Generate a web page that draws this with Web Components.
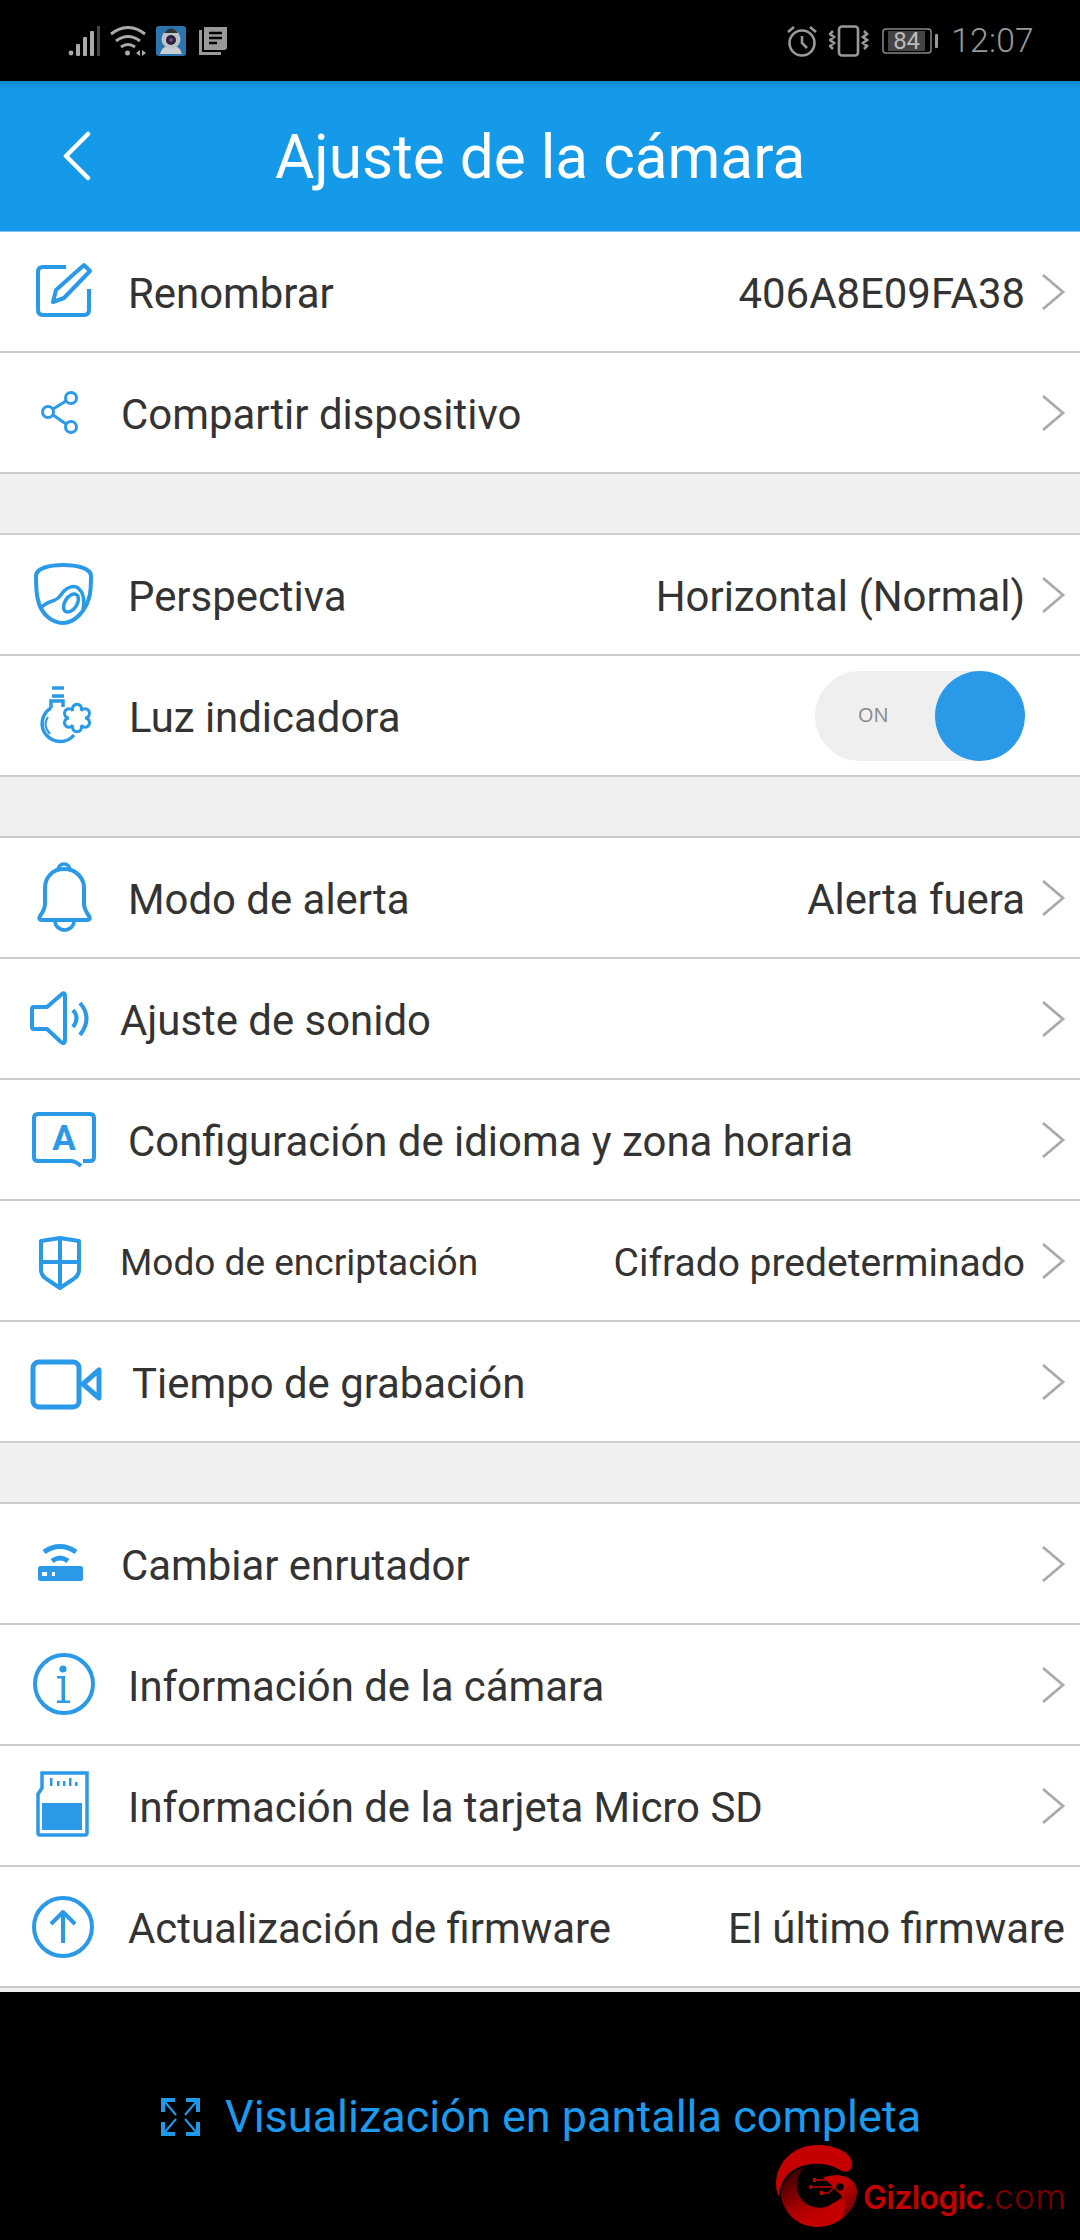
<!DOCTYPE html>
<html>
<head>
<meta charset="utf-8">
<title>Ajuste de la cámara</title>
<style>
  html, body { margin: 0; padding: 0; background: #000; }
  body { width: 1080px; height: 2240px; overflow: hidden; position: relative; font-family: Roboto, "Liberation Sans", sans-serif; }
</style>
</head>
<body>
  <cam-status-bar></cam-status-bar>
  <cam-header title-text="Ajuste de la cámara"></cam-header>
  <cam-list>
    <cam-row label="Renombrar" value="406A8E09FA38" tx="128" icon="edit"></cam-row>
    <cam-row label="Compartir dispositivo" tx="121" icon="share"></cam-row>
    <cam-gap></cam-gap>
    <cam-row label="Perspectiva" value="Horizontal (Normal)" tx="128" icon="dome"></cam-row>
    <cam-row label="Luz indicadora" tx="129" icon="bulb" no-chevron>
      <cam-toggle slot="right"></cam-toggle>
    </cam-row>
    <cam-gap></cam-gap>
    <cam-row label="Modo de alerta" value="Alerta fuera" tx="128" icon="bell"></cam-row>
    <cam-row label="Ajuste de sonido" tx="120" icon="speaker"></cam-row>
    <cam-row label="Configuración de idioma y zona horaria" tx="128" icon="bubble"></cam-row>
    <cam-row label="Modo de encriptación" value="Cifrado predeterminado" tx="120" small icon="shield"></cam-row>
    <cam-row label="Tiempo de grabación" tx="132" icon="camera"></cam-row>
    <cam-gap></cam-gap>
    <cam-row label="Cambiar enrutador" tx="121" icon="router"></cam-row>
    <cam-row label="Información de la cámara" tx="128" icon="info"></cam-row>
    <cam-row label="Información de la tarjeta Micro SD" tx="128" icon="sd"></cam-row>
    <cam-row label="Actualización de firmware" value="El último firmware" tx="128" icon="up" no-chevron></cam-row>
  </cam-list>
  <cam-footer text="Visualización en pantalla completa"></cam-footer>
  <cam-logo></cam-logo>

<script>
// icon drawings, coordinates are px from the left of the screen / top of the row
const ICONS = {
  edit: `<g transform="translate(0 2)"><path d="M66 34H43q-5 0-5 5v38q0 5 5 5h41q5 0 5-5V56"/>
         <path d="M53 69l3-12 28-25 6 6-26 27z" stroke-linejoin="round"/></g>`,
  share: `<g stroke-width="3"><circle cx="71" cy="46" r="5.500"/><circle cx="48" cy="60" r="5.500"/><circle cx="71" cy="75" r="5.500"/>
          <path d="M53 57l13-8M53 63l13 9"/></g>`,
  dome: `<path d="M36 42c0-8 14-11 27-11s28 3 28 11c0 6 0 16-2 22-4 14-15 25-26 25S41 80 38 66c-2-7-2-16-2-24z"/>
         <path d="M42 73c4-5 9-5 13-7 5-2 6-6 9-9 4-4 10-6 14-3 5 4 7 12 5 22" stroke-width="3.500"/>
         <ellipse cx="71" cy="69" rx="6" ry="10" transform="rotate(33 71 69)" stroke-width="3.500"/>`,
  bulb: `<g stroke-width="3.500"><path d="M52 33h12M52 41h12"/>
         <path d="M51 53v-7h12v6M51 53A18 18 0 1 0 74 80"/>
         <path d="M48 62q-6 8 2 17" stroke-width="2"/>
         <path d="M73 56A4.600 4.600 0 1 1 81 56A4.600 4.600 0 1 1 85 63A4.600 4.600 0 1 1 81 70A4.600 4.600 0 1 1 73 70A4.600 4.600 0 1 1 69 63A4.600 4.600 0 1 1 73 56z" stroke-width="3"/></g>`,
  bell: `<path d="M64 32C52 32 45 41 45 51v16q0 5-5 12-2 4 2 4h45q4 0 2-4-5-7-5-12V51c0-10-8-19-20-19z" stroke-linejoin="round"/>
         <path d="M58 33a6 6 0 0 1 12 0M55 84a9.500 9 0 0 0 19 0" stroke-width="3.500"/>`,
  speaker: `<path d="M34 49h13l15-13q3-2 3 2v44q0 5-4 2L47 71H34q-2 0-2-2V51q0-2 2-2z" stroke-linejoin="round"/>
         <path d="M73 52q7 8 0 17M80 45q13 15 0 32"/>`,
  bubble: `<path d="M83 82h7q4 0 4-4V39q0-4-4-4H38q-4 0-4 4v39q0 4 4 4h32q6 0 11 5"/>
         <text x="64" y="71" text-anchor="middle" font-family="Roboto, sans-serif" font-size="35" font-weight="700" fill="#2a9ae8" stroke="none">A</text>`,
  shield: `<path d="M60 38l-19 3v29q0 6 7 10l12 8 12-8q7-4 7-10V41zM60 38v50M41 62h38" stroke-linejoin="round"/>`,
  camera: `<rect x="33" y="41" width="46" height="45" rx="6" stroke-width="5"/><path d="M83 63l16-14v28z" stroke-width="5" stroke-linejoin="round"/>`,
  router: `<path d="M44 49q16-11 32 0M52 58q8-6 16 0" stroke-width="5"/>
         <rect x="38" y="63" width="45" height="15" rx="2.500" fill="#2a9ae8" stroke="none"/>
         <rect x="42" y="69" width="5" height="4" fill="#fff" stroke="none"/><rect x="52" y="69" width="3" height="4" fill="#fff" stroke="none"/>`,
  info: `<circle cx="64" cy="60" r="29"/><g fill="#2a9ae8" stroke="none"><circle cx="63" cy="45" r="3.600"/>
         <rect x="57" y="52" width="8" height="2.500"/><rect x="61.500" y="52" width="3.500" height="26"/><rect x="57" y="76.500" width="13" height="2.500"/></g>`,
  sd: `<path d="M42 28h45v60q0 2-2 2H40q-2 0-2-2V49l4-6z" stroke-width="3.500"/>
         <g fill="#2a9ae8" stroke="none"><rect x="42" y="58" width="40" height="27"/>
         <rect x="50" y="33" width="2.500" height="8"/><rect x="57" y="36" width="2.500" height="5"/><rect x="63" y="36" width="2.500" height="5"/><rect x="69" y="33" width="2.500" height="8"/><rect x="75" y="37" width="2.500" height="4"/></g>`,
  up: `<circle cx="63" cy="61" r="29"/><path d="M63 46v31M51 58l12-12 12 12" stroke-linejoin="round"/>`
};

class CamStatusBar extends HTMLElement {
  constructor() {
    super();
    this.attachShadow({ mode: 'open' });
    this.shadowRoot.innerHTML = `
      <style>
        :host { display: flex; align-items: center; height: 81px; background: #000; padding: 0 46px 0 68px; box-sizing: border-box; color: #999; }
        .left, .right { display: flex; align-items: center; }
        .left { gap: 10px; }
        .spacer { flex: 1; }
        svg { display: block; }
        .bat { position: relative; width: 56px; height: 26px; margin: 0 13px 0 13px; }
        .bat span { position: absolute; left: 6px; top: 3px; width: 37px; height: 20px; background: #444; color: #bbb; font-size: 24px; line-height: 20px; text-align: center; }
        .bat svg { position: absolute; left: 0; top: 0; }
        .time { font-size: 33.500px; font-weight: 300; line-height: 40px; letter-spacing: 0.3px; }
      </style>
      <div class="left">
        <svg width="32" height="30" viewBox="0 0 32 30">
          <circle cx="3" cy="27" r="2.400" fill="#aaa"/>
          <rect x="8" y="18" width="4" height="12" rx="1" fill="#aaa"/><rect x="15" y="11" width="4" height="19" rx="1" fill="#aaa"/>
          <rect x="22" y="5" width="4" height="25" rx="1" fill="#aaa"/><rect x="29" y="0" width="3" height="30" fill="#444"/>
        </svg>
        <svg width="36" height="30" viewBox="0 0 36 30" fill="none" stroke="#aaa" stroke-width="3">
          <path d="M1 8q17-13 34 0M6 15q12-9 24 0M11 21q7-5 14 0"/>
          <circle cx="17.500" cy="27" r="2.500" fill="#aaa" stroke="none"/>
          <path d="M26 27l4-3v6zM32 24l4 3-4 3z" fill="#aaa" stroke="none"/>
        </svg>
        <svg width="30" height="30" viewBox="0 0 30 30">
          <rect width="30" height="30" rx="3" fill="#2b74ad"/>
          <path d="M4 28q2-7 7-8h8q5 1 7 8z" fill="#c9cdd2"/>
          <circle cx="15" cy="13" r="9.500" fill="#bfc3c8"/>
          <path d="M8 7q7-9 14 0z" fill="#333"/>
          <circle cx="15" cy="14" r="5" fill="#2a2136"/><circle cx="15" cy="14" r="2" fill="#6d4a9a"/>
        </svg>
        <svg style="margin-left:3px" width="28" height="28" viewBox="0 0 28 28">
          <path d="M5 0h23v20q0 3-3 3H5z" fill="#999"/>
          <path d="M10 6h13M10 11h13M10 16h8" stroke="#000" stroke-width="2.500"/>
          <path d="M1.500 3v23.500H22" stroke="#999" stroke-width="3" fill="none"/>
        </svg>
      </div>
      <div class="spacer"></div>
      <div class="right">
        <svg width="32" height="32" viewBox="0 0 32 32" fill="none" stroke="#999" stroke-width="2.600">
          <circle cx="16" cy="18" r="12.500"/><path d="M16 11v7l5 5M2 7l6-5M30 7l-6-5"/>
        </svg>
        <svg style="margin-left:11px" width="40" height="32" viewBox="0 0 40 32" fill="none" stroke="#999" stroke-width="2.600">
          <rect x="10" y="1.500" width="19" height="29" rx="3"/>
          <path d="M4 6l-3 3 4 3-4 3 4 3-4 3 3 3M35 6l3 3-4 3 4 3-4 3 4 3-3 3"/>
        </svg>
        <div class="bat">
          <svg width="56" height="26" viewBox="0 0 56 26" fill="none"><rect x="1" y="1" width="48" height="24" rx="3" stroke="#888" stroke-width="1.500"/><rect x="53" y="6" width="3" height="14" rx="1" fill="#999"/></svg>
          <span>84</span>
        </div>
        <span class="time">12:07</span>
      </div>`;
  }
}

class CamHeader extends HTMLElement {
  constructor() {
    super();
    this.attachShadow({ mode: 'open' });
    this.shadowRoot.innerHTML = `
      <style>
        :host { display: flex; align-items: center; height: 150px; padding-left: 62px; box-sizing: border-box; color: #fff;
                background: linear-gradient(#1288d2, #149ae9 9px); }
        svg { display: block; flex: none; }
        h1 { margin: 4px 0 0 183px; font-size: 60.300px; font-weight: 400; line-height: 70px; white-space: nowrap; }
      </style>
      <svg width="30" height="50" viewBox="0 0 30 50" fill="none" stroke="#fff" stroke-width="4.500" stroke-linecap="round" stroke-linejoin="round"><path d="M26 3L4 25l22 22"/></svg>
      <h1></h1>`;
    this.shadowRoot.querySelector('h1').textContent = this.getAttribute('title-text');
  }
}

class CamList extends HTMLElement {
  constructor() {
    super();
    this.attachShadow({ mode: 'open' });
    this.shadowRoot.innerHTML = `
      <style>
        :host { display: flex; flex-direction: column; background: #f0f0f0; height: 1761px; border-top: 1px solid #7fc6f2; box-sizing: border-box; }
        ::slotted(cam-gap) { display: block; height: 61px; border-bottom: 2px solid #ccc; box-sizing: border-box; flex: none; }
      </style>
      <slot></slot>`;
  }
}

class CamGap extends HTMLElement {}

class CamRow extends HTMLElement {
  constructor() {
    super();
    this.attachShadow({ mode: 'open' });
    const value = this.getAttribute('value');
    const noChev = this.hasAttribute('no-chevron');
    const small = this.hasAttribute('small');
    const chevron = noChev ? '' : `
      <svg class="chev" width="26" height="40" viewBox="0 0 26 40" fill="none" stroke="#aaa" stroke-width="2.800"><path d="M3 3l20 17L3 37"/></svg>`;
    this.shadowRoot.innerHTML = `
      <style>
        :host { display: flex; align-items: center; height: 121px; flex: none; box-sizing: border-box; background: #fff;
                border-bottom: 2px solid #ccc; color: #333; font-size: 41.900px; padding-right: ${noChev ? 15 : 14}px; }
        .icon { flex: none; width: ${this.getAttribute('tx')}px; height: 119px; align-self: flex-start; }
        .icon svg { display: block; overflow: visible; fill: none; stroke: #2a9ae8; stroke-width: 4; margin-top: -1px; }
        .label { flex: 1; white-space: nowrap; line-height: 50px; margin-top: 4px; ${small ? 'font-size: 37px;' : ''} }
        .value { white-space: nowrap; line-height: 50px; margin-top: 4px; ${small ? 'font-size: 39px;' : ''} }
        .chev { flex: none; margin-left: 15px; }
      </style>
      <div class="icon"><svg width="110" height="121" viewBox="0 0 110 121">${ICONS[this.getAttribute('icon')]}</svg></div>
      <span class="label"></span>
      ${value ? '<span class="value"></span>' : ''}
      <slot name="right"></slot>
      ${chevron}`;
    this.shadowRoot.querySelector('.label').textContent = this.getAttribute('label');
    if (value) this.shadowRoot.querySelector('.value').textContent = value;
  }
}

class CamToggle extends HTMLElement {
  constructor() {
    super();
    this.attachShadow({ mode: 'open' });
    this.shadowRoot.innerHTML = `
      <style>
        :host { display: flex; align-items: center; width: 210px; height: 90px; border-radius: 45px; background: #efefef; margin-right: 40px; position: relative; }
        span { margin: -2px 0 0 43px; font: 20px "Open Sans", sans-serif; color: #888; }
        i { position: absolute; right: 0; top: 0; width: 90px; height: 90px; border-radius: 50%; background: #2a9ae8; }
      </style>
      <span>ON</span><i></i>`;
  }
}

class CamFooter extends HTMLElement {
  constructor() {
    super();
    this.attachShadow({ mode: 'open' });
    this.shadowRoot.innerHTML = `
      <style>
        :host { display: flex; align-items: center; height: 248px; background: #000; box-sizing: border-box; padding: 2px 0 0 161px; color: #1c9bee; }
        svg { display: block; flex: none; }
        span { margin-left: 25px; font-size: 45px; line-height: 56px; white-space: nowrap; }
      </style>
      <svg width="39" height="38" viewBox="0 0 39 38" fill="none" stroke="#1c9bee" stroke-width="3.500">
        <path d="M14 2H2v12M25 2h12v12M14 36H2V24M25 36h12V24" stroke-width="4"/>
        <path d="M4 4l11 13M35 4L24 17M4 34l11-13M35 34L24 21" stroke-width="2"/>
      </svg>
      <span></span>`;
    this.shadowRoot.querySelector('span').textContent = this.getAttribute('text');
  }
}

class CamLogo extends HTMLElement {
  constructor() {
    super();
    this.attachShadow({ mode: 'open' });
    this.shadowRoot.innerHTML = `
      <style>
        :host { position: absolute; left: 776px; top: 2145px; display: block; width: 300px; height: 82px; }
        svg { position: absolute; left: 0; top: 0; overflow: visible; }
        span { position: absolute; left: 87px; top: 31px; font: 600 32px/40px Inter, sans-serif; letter-spacing: -0.6px; color: #c40000; white-space: nowrap; }
        b { font-weight: 300; font-size: 35px; color: #7a0000; letter-spacing: 0.5px; }
      </style>
      <svg width="82" height="82" viewBox="0 0 82 82">
        <defs>
          <linearGradient id="g" x1="0.100" y1="0.200" x2="0.500" y2="0.850"><stop offset="0" stop-color="#4a0000"/><stop offset="0.700" stop-color="#b00000"/><stop offset="1" stop-color="#c40000"/></linearGradient>
          <linearGradient id="h" x1="0.500" y1="0.300" x2="1" y2="0.900"><stop offset="0" stop-color="#c40000"/><stop offset="1" stop-color="#6a0000"/></linearGradient>
        </defs>
        <path fill="#c40000" d="M0 40C0 15 20 0 41 0c19 0 36 8 35 20-1 8-8 8-14 4-10-6-22-6-32-4C14 23 4 35 3 52c-2-5-3-8-3-12z"/>
        <path fill="url(#g)" d="M5 50C5 38 14 27 28 22c-9 11-9 25-2 33 7 8 20 10 28 5 8-5 20-10 16-18-4-6-14-8-23-9 11-5 25-3 31 5 6 8 2 22-8 32-8 8-18 12-29 12C22 82 7 68 5 50z"/>
        <path fill="url(#h)" d="M47 33c11-5 25-3 31 5 6 8 2 22-8 32-2 2-3 2-5 4 4-8 6-16 1-22-5-7-12-15-19-19z"/>
        <g fill="none" stroke="#c40000" stroke-width="1.500">
          <path d="M34 42h27M39 35h12l8 7M46 48h6l7-6"/><circle cx="64" cy="42" r="4.500" fill="#000"/>
        </g>
        <path fill="#c40000" d="M32 42l4-2.500v5zM37 33h3v4h-3zM44 46h3v4h-3z"/>
      </svg>
      <span>Gizlogic<b>.com</b></span>`;
  }
}

customElements.define('cam-status-bar', CamStatusBar);
customElements.define('cam-header', CamHeader);
customElements.define('cam-list', CamList);
customElements.define('cam-gap', CamGap);
customElements.define('cam-row', CamRow);
customElements.define('cam-toggle', CamToggle);
customElements.define('cam-footer', CamFooter);
customElements.define('cam-logo', CamLogo);
</script>
</body>
</html>
